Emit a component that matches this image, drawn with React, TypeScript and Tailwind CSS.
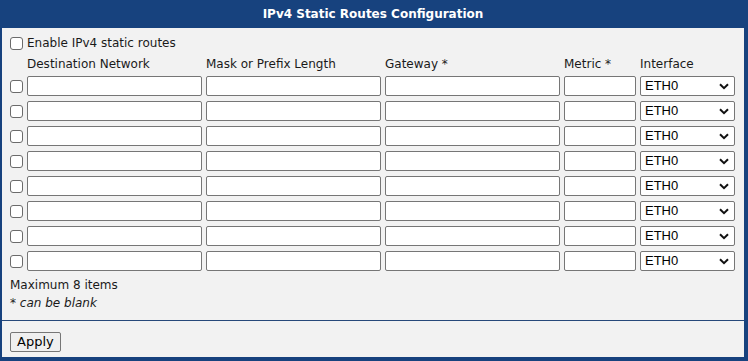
import { useState } from 'react';

const ROWS = 8;

const Checkbox = () => (
  <input
    type="checkbox"
    className="appearance-none w-[13px] h-[13px] shrink-0 rounded-[3px] border border-[#6b6b6b] bg-white m-0"
  />
);

const Field = ({ w }: { w: string }) => (
  <input
    type="text"
    className={`${w} h-[20px] shrink-0 rounded-[2px] border border-[#767676] bg-white px-1 text-[12px] outline-none`}
  />
);

const Select = () => (
  <div className="relative w-[95px] h-[20px] shrink-0 rounded-[2px] border border-[#767676] bg-white">
    <span className="absolute left-[4px] top-[1px] text-[13px] leading-[16px] text-black font-['Liberation_Sans',Arial,sans-serif]">
      ETH0
    </span>
    <svg
      className="absolute right-[5px] top-[6px]"
      width="10"
      height="7"
      viewBox="0 0 10 7"
      fill="none"
    >
      <path d="M1 1.2 L5 5.2 L9 1.2" stroke="#111" strokeWidth="2" />
    </svg>
  </div>
);

const App = () => {
  const [rows] = useState(Array.from({ length: ROWS }, (_, i) => i));

  return (
    <div className="w-[748px] h-[361px] bg-[#17427e] pl-[2px] pr-[4px] pb-[4px] flex flex-col font-['DejaVu_Sans',Verdana,sans-serif] text-[#1a1a1a]">
      <div className="h-[28px] flex items-center justify-center text-white font-bold text-[12px]">
        IPv4 Static Routes Configuration
      </div>
      <div className="flex-1 bg-[#f2f2f2] flex flex-col">
        <div className="px-[8px] pt-[7px] flex flex-col">
          <label className="flex items-center gap-[4px] h-[16px] text-[12px]">
            <Checkbox />
            <span>Enable IPv4 static routes</span>
          </label>
          <div className="flex gap-[4px] mt-[4px] h-[18px] items-center text-[12px]">
            <div className="w-[13px]" />
            <div className="w-[175px]">Destination Network</div>
            <div className="w-[175px]">Mask or Prefix Length</div>
            <div className="w-[175px]">Gateway *</div>
            <div className="w-[72px]">Metric *</div>
            <div className="w-[95px]">Interface</div>
          </div>
          <div className="flex flex-col gap-[5px] mt-[3px]">
            {rows.map((r) => (
              <div key={r} className="flex items-center gap-[4px]">
                <Checkbox />
                <Field w="w-[175px]" />
                <Field w="w-[175px]" />
                <Field w="w-[175px]" />
                <Field w="w-[72px]" />
                <Select />
              </div>
            ))}
          </div>
          <div className="mt-[6px] text-[12px] leading-[16px]">Maximum 8 items</div>
          <div className="mt-[2px] text-[12px] leading-[16px]">
            * <span className="italic">can be blank</span>
          </div>
        </div>
        <div className="mt-auto border-t border-[#27497a] h-[37px] px-[8px] pt-[8px]">
          <button className="h-[20px] px-[6px] rounded-[2px] border border-[#767676] bg-[#efefef] text-[13px] leading-[16px] text-black font-['DejaVu_Sans',Verdana,sans-serif]">
            Apply
          </button>
        </div>
      </div>
    </div>
  );
};

export default App;
